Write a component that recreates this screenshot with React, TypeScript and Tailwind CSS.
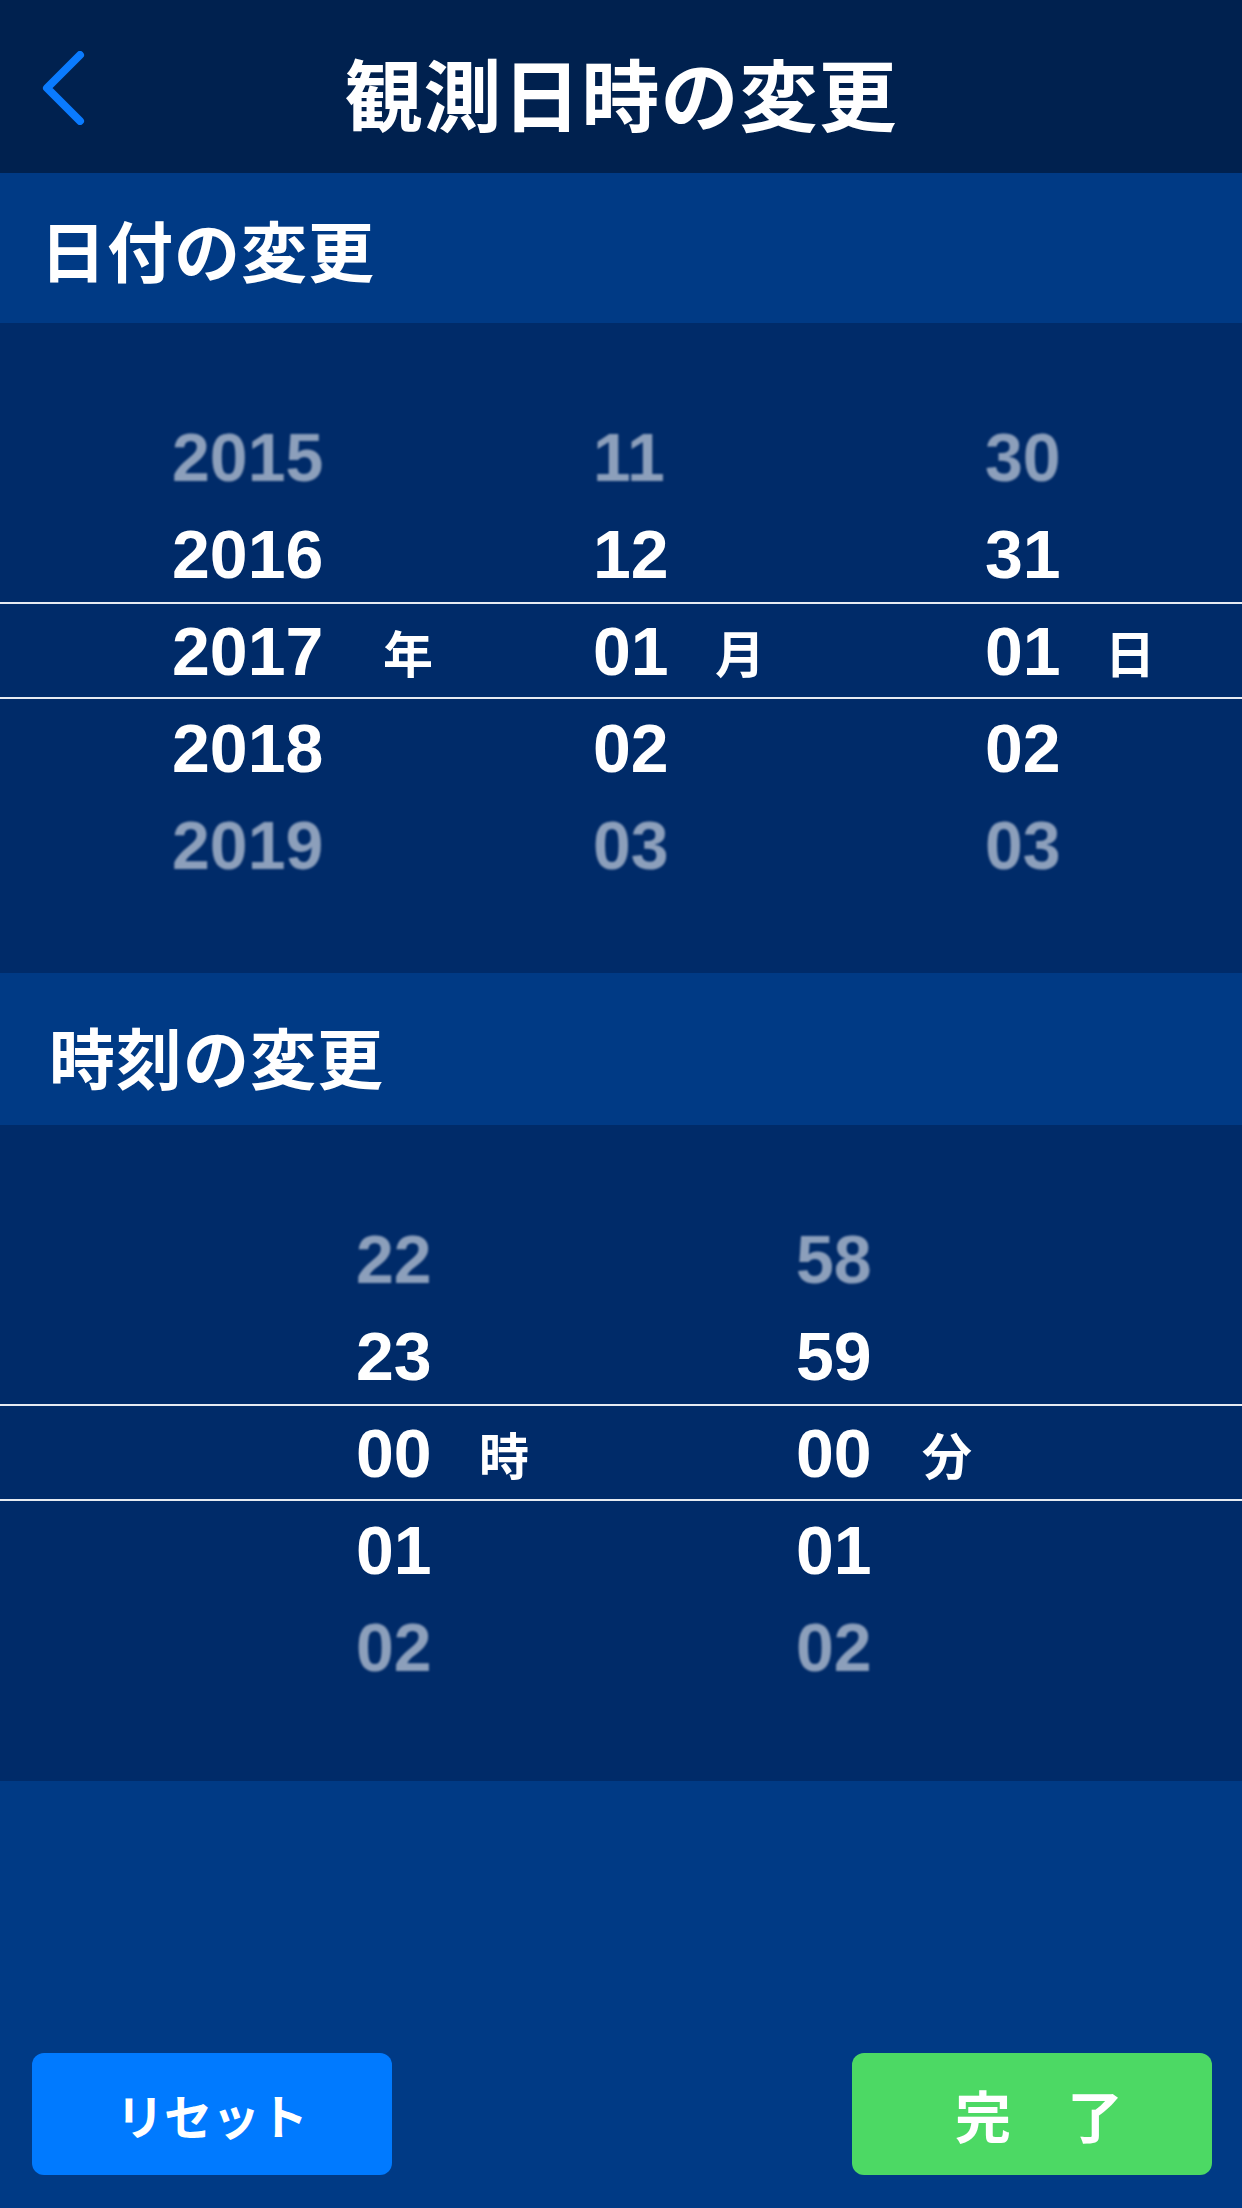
import React from "react";

const jp = { fontFamily: '"Noto Sans CJK JP", "Noto Sans", sans-serif' };
const num = { fontFamily: '"Liberation Sans", Arial, sans-serif' };

type Cell = { w: string; text?: string; unit?: boolean };

function PickerRow({
  cells,
  pad,
  tone,
}: {
  cells: Cell[];
  pad: string;
  tone: "far" | "near" | "selected";
}) {
  const rowCls =
    tone === "selected"
      ? "border-y-2 border-[#e6ebf2]"
      : "";
  const textCls =
    tone === "far" ? "text-white/55 blur-[1px]" : "text-white";
  return (
    <div className={`flex h-[97px] items-center ${pad} ${rowCls}`}>
      {cells.map((c, i) =>
        c.unit ? (
          <span
            key={i}
            style={jp}
            className={`${c.w} text-[50px] font-bold leading-none text-white`}
          >
            {tone === "selected" ? c.text : ""}
          </span>
        ) : (
          <span
            key={i}
            style={num}
            className={`${c.w} text-[68px] font-bold leading-none ${textCls}`}
          >
            {c.text}
          </span>
        )
      )}
    </div>
  );
}

function Picker({
  columns,
  widths,
  units,
  pad,
  className,
}: {
  columns: string[][];
  widths: string[];
  units: string[];
  pad: string;
  className: string;
}) {
  const tones: ("far" | "near" | "selected")[] = [
    "far",
    "near",
    "selected",
    "near",
    "far",
  ];
  return (
    <div className={`bg-[#002B69] ${className}`}>
      {tones.map((tone, r) => {
        const cells: Cell[] = [];
        columns.forEach((col, ci) => {
          cells.push({ w: widths[ci * 2], text: col[r] });
          cells.push({ w: widths[ci * 2 + 1], text: units[ci], unit: true });
        });
        return <PickerRow key={r} cells={cells} pad={pad} tone={tone} />;
      })}
    </div>
  );
}

function SectionTitle({ label, pad, h }: { label: string; pad: string; h: string }) {
  return (
    <div className={`flex ${h} items-center bg-[#003A85] ${pad}`}>
      <h2 style={jp} className="text-[66px] font-bold leading-none tracking-[1px] text-white">
        {label}
      </h2>
    </div>
  );
}

export default function App() {
  return (
    <div className="flex min-h-[2208px] w-[1242px] flex-col bg-[#003A85]">
      <header className="grid h-[173px] grid-cols-[1fr_auto_1fr] items-center bg-[#00214F]">
        <div className="flex items-center pl-[40px] pt-[2px]">
          <svg width="48" height="74" viewBox="0 0 48 74" fill="none">
            <polyline
              points="40,4 7,37 40,70"
              stroke="#0A7BFF"
              strokeWidth="8"
              strokeLinecap="round"
              strokeLinejoin="round"
            />
          </svg>
        </div>
        <h1
          style={jp}
          className="pt-[10px] text-[78px] font-bold leading-none tracking-[1px] text-white"
        >
          観測日時の変更
        </h1>
        <div />
      </header>

      <SectionTitle label="日付の変更" pad="pl-[40px]" h="h-[150px]" />
      <Picker
        className="pt-[85px] pb-[80px]"
        pad="pl-[172px]"
        widths={["w-[211px]", "w-[210px]", "w-[122px]", "w-[270px]", "w-[120px]", "w-[60px]"]}
        units={["年", "月", "日"]}
        columns={[
          ["2015", "2016", "2017", "2018", "2019"],
          ["11", "12", "01", "02", "03"],
          ["30", "31", "01", "02", "03"],
        ]}
      />

      <SectionTitle label="時刻の変更" pad="pl-[49px] pt-[12px]" h="h-[152px]" />
      <Picker
        className="pt-[85px] pb-[86px]"
        pad="pl-[356px]"
        widths={["w-[123px]", "w-[317px]", "w-[126px]", "w-[60px]"]}
        units={["時", "分"]}
        columns={[
          ["22", "23", "00", "01", "02"],
          ["58", "59", "00", "01", "02"],
        ]}
      />

      <div className="mt-auto flex items-center justify-between pb-[33px] pl-[32px] pr-[30px]">
        <button
          style={jp}
          className="flex h-[122px] w-[360px] items-center justify-center rounded-[12px] bg-[#007AFF] text-[48px] font-bold text-white"
        >
          リセット
        </button>
        <button
          style={jp}
          className="flex h-[122px] w-[360px] items-center justify-center rounded-[12px] bg-[#4CD964] pl-[14px] text-[56px] font-bold text-white"
        >
          完　了
        </button>
      </div>
    </div>
  );
}
